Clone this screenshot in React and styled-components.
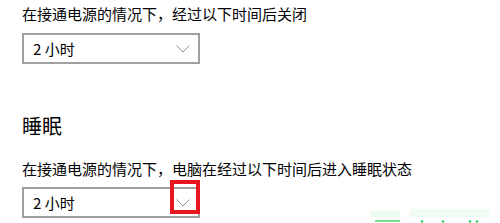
import React from "react";
import styled, { createGlobalStyle } from "styled-components";

const Global = createGlobalStyle`
  html, body { margin: 0; padding: 0; background: #ffffff; }
  body { width: 500px; height: 223px; overflow: hidden; }
`;

const Page = styled.div`
  position: relative;
  width: 500px;
  height: 223px;
  box-sizing: border-box;
  padding: 4px 0 0 22px;
  font-family: "Microsoft YaHei", "Noto Sans CJK SC", "Noto Sans", sans-serif;
  color: #000;
  display: flex;
  flex-direction: column;
  align-items: flex-start;
  overflow: hidden;
`;

const Desc = styled.div`
  font-size: 15px;
  line-height: 20px;
  margin-top: ${(p) => p.$mt || 0}px;
`;

const Heading = styled.div`
  font-size: 20px;
  line-height: 28px;
  margin-top: ${(p) => p.$mt || 0}px;
`;

const Select = styled.div`
  position: relative;
  margin-top: ${(p) => p.$mt || 0}px;
  width: 178px;
  height: 31px;
  box-sizing: border-box;
  border: 2px solid #a0a0a0;
  display: flex;
  align-items: center;
  justify-content: space-between;
  padding: 0 8px 0 9px;
  font-size: 15px;
`;

const Chevron = styled.svg`
  display: block;
  margin-top: 1px;
`;

const Highlight = styled.div`
  position: absolute;
  right: -2px;
  top: -9px;
  width: 30px;
  height: 34px;
  box-sizing: border-box;
  border: 4px solid #e8141e;
`;

const Watermark = styled.svg`
  position: absolute;
  left: 370px;
  top: 205px;
`;

function Dropdown({ value, mt, highlighted }) {
  return (
    <Select $mt={mt}>
      <span>{value}</span>
      <Chevron width="14" height="8" viewBox="0 0 14 8">
        <polyline points="0.5,0.5 7,7 13.5,0.5" fill="none" stroke="#929292" strokeWidth="1" />
      </Chevron>
      {highlighted && <Highlight />}
    </Select>
  );
}

export default function App() {
  return (
    <Page>
      <Global />
      <Desc>在接通电源的情况下，经过以下时间后关闭</Desc>
      <Dropdown value="2 小时" mt={9} />
      <Heading $mt={48}>睡眠</Heading>
      <Desc $mt={19}>在接通电源的情况下，电脑在经过以下时间后进入睡眠状态</Desc>
      <Dropdown value="2 小时" mt={8} highlighted />
      <Watermark width="130" height="18" viewBox="0 0 130 18">
        <rect x="0" y="6" width="30" height="6" fill="#d8f8df" opacity="0.5" />
        <rect x="40" y="4" width="80" height="8" fill="#e2fae7" opacity="0.5" />
        <rect x="5" y="15" width="25" height="2" fill="#3ad060" opacity="0.7" />
        <circle cx="52" cy="16.5" r="1.3" fill="#2ecc55" />
        <circle cx="73" cy="16.5" r="1.3" fill="#2ecc55" />
        <circle cx="100" cy="16.5" r="1.3" fill="#2ecc55" />
        <circle cx="107" cy="16.5" r="1.3" fill="#2ecc55" />
      </Watermark>
    </Page>
  );
}
